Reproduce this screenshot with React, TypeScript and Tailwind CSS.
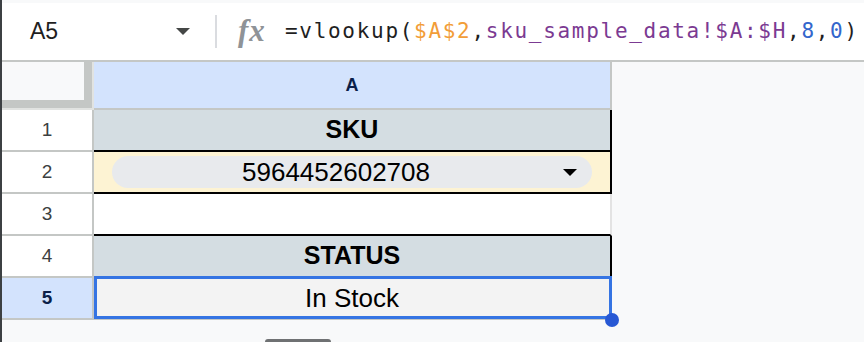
import React from "react";

const GRID_LINE = "border-[#c4c7c5]";

function FormulaBar() {
  return (
    <div className="h-[59px] bg-white border-b-2 border-[#c4c7c5] flex items-center">
      {/* name box */}
      <div className="w-[213px] pl-[28px] pr-[25px] flex items-center justify-between">
        <span className="text-[23px] text-[#1f1f1f]">A5</span>
        <span className="inline-block w-0 h-0 border-l-[7px] border-r-[7px] border-t-[7px] border-l-transparent border-r-transparent border-t-[#444746]" />
      </div>
      <div className="w-[2px] h-[33px] bg-[#dadce0]" />
      <span className="ml-[21px] w-[30px] text-[31px] leading-none italic font-bold text-[#8f9397] font-['Liberation_Serif',serif] tracking-[1px] -mt-[2px]">
        fx
      </span>
      <div className="ml-[17px] text-[21px] tracking-[1.7px] text-[#1f1f1f] font-['DejaVu_Sans_Mono',monospace] whitespace-nowrap">
        =vlookup(
        <span className="text-[#f29d38]">$A$2</span>,
        <span className="text-[#7b3a92]">sku_sample_data!$A:$H</span>,
        <span className="text-[#3366cc]">8</span>,
        <span className="text-[#3366cc]">0</span>)
      </div>
    </div>
  );
}

type Row = {
  n: number;
  bg: string;
  right: string;
  bottom: string;
  content?: React.ReactNode;
  selected?: boolean;
};

const rows: Row[] = [
  {
    n: 1,
    bg: "bg-[#d4dde2]",
    right: "border-r-black",
    bottom: "border-b-black",
    content: <span className="font-bold text-[25px]">SKU</span>,
  },
  {
    n: 2,
    bg: "bg-[#fdf3d3]",
    right: "border-r-black",
    bottom: "border-b-black",
    content: (
      <div className="w-full px-[18px]">
        <div className="h-[32px] rounded-full bg-[#e8eaed] flex items-center">
          <span className="flex-1 text-center text-[26px] leading-none">5964452602708</span>
          <span className="ml-[3px] mr-[15px] inline-block w-0 h-0 border-l-[7px] border-r-[7px] border-t-[7px] border-l-transparent border-r-transparent border-t-black" />
        </div>
      </div>
    ),
  },
  {
    n: 3,
    bg: "bg-white",
    right: "border-r-[#e3e3e3]",
    bottom: "border-b-black",
  },
  {
    n: 4,
    bg: "bg-[#d4dde2]",
    right: "border-r-black",
    bottom: "border-b-black",
    content: <span className="font-bold text-[25px]">STATUS</span>,
  },
  {
    n: 5,
    bg: "bg-[#f3f3f3]",
    right: "border-r-[#c4c7c5]",
    bottom: "border-b-[#c4c7c5]",
    content: <span className="text-[26px]">In Stock</span>,
    selected: true,
  },
];

function Grid() {
  return (
    <div className="relative flex flex-col">
      {/* column header row */}
      <div className="flex h-[48px]">
        <div className="w-[92px] h-[48px] border-r-2 border-b-2 border-[#e1e3e1] bg-[#c4c7c5]">
          <div className="w-[82px] h-[38px] bg-[#f8f9fa]" />
        </div>
        <div className={`w-[518px] h-[48px] bg-[#d3e3fd] border-r-2 border-b-2 ${GRID_LINE} flex items-center justify-center`}>
          <span className="font-bold text-[18px] text-[#0b1f4a]">A</span>
        </div>
      </div>

      {rows.map((r) => (
        <div key={r.n} className="flex h-[42px]">
          <div
            className={`w-[92px] h-[42px] border-r-2 border-b-2 ${GRID_LINE} flex items-center justify-center text-[19px] ${
              r.selected ? "bg-[#d3e3fd] font-bold text-[#0b1f4a]" : "bg-white text-[#3c3f41]"
            }`}
          >
            {r.n}
          </div>
          <div
            className={`w-[518px] h-[42px] border-r-2 border-b-2 ${r.right} ${r.bottom} ${r.bg} flex items-center justify-center text-black`}
          >
            {r.content}
          </div>
        </div>
      ))}

      {/* selection box + fill handle */}
      <div className="absolute left-[92px] top-[214px] w-[518px] h-[43px] border-[3px] border-[#3574e3] pointer-events-none" />
      <div className="absolute left-[603px] top-[251px] w-[14px] h-[14px] rounded-full bg-[#2758d4]" />
    </div>
  );
}

export default function App() {
  return (
    <div className="w-[864px] h-[342px] flex bg-[#f8f9fa] overflow-hidden font-['Liberation_Sans',Arial,sans-serif]">
      <div className="w-[2px] h-full bg-[#3c4043]" />
      <div className="flex-1 flex flex-col relative">
        <div className="h-[3px]" />
        <FormulaBar />
        <Grid />
        <div className="absolute left-[263px] top-[339px] w-[66px] h-[3px] rounded-t bg-[#6f7173]" />
      </div>
    </div>
  );
}
